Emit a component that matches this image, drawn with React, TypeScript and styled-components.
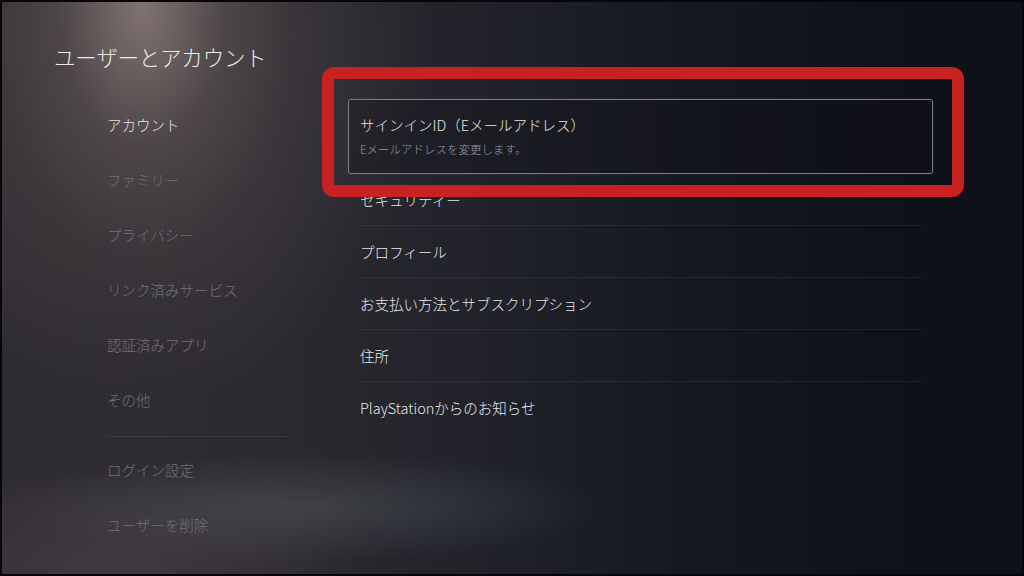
import styled, { createGlobalStyle } from 'styled-components'

const GlobalStyle = createGlobalStyle`
  html, body {
    margin: 0;
    padding: 0;
    background: #000;
  }
  * {
    box-sizing: border-box;
  }
`

const Screen = styled.div`
  position: relative;
  display: flex;
  width: 1024px;
  height: 576px;
  overflow: hidden;
  border: 2px solid #060608;
  font-family: 'Noto Sans CJK JP', 'Noto Sans', sans-serif;
  font-weight: 300;
  background:
    radial-gradient(ellipse 150px 260px at 140px 0px, rgba(165, 148, 142, 0.6), rgba(120, 105, 102, 0.2) 55%, rgba(0, 0, 0, 0) 100%),
    radial-gradient(ellipse 280px 360px at 150px 40px, rgba(105, 92, 92, 0.5), rgba(0, 0, 0, 0) 100%),
    radial-gradient(ellipse 300px 55px at 300px 505px, rgba(85, 90, 96, 0.5), rgba(0, 0, 0, 0) 100%),
    radial-gradient(ellipse 260px 90px at 120px 560px, rgba(90, 75, 82, 0.45), rgba(0, 0, 0, 0) 100%),
    linear-gradient(90deg, #302d32 0%, #2c2a30 25%, #22232b 45%, #171922 65%, #10121b 85%, #0e101a 100%);
`

const Sidebar = styled.aside`
  display: flex;
  flex-direction: column;
  width: 346px;
  flex-shrink: 0;
  padding: 40px 0 0 52px;
`

const Title = styled.h1`
  margin: 0 0 25px;
  font-size: 21.5px;
  font-weight: 300;
  line-height: 30px;
  color: #ebeaea;
  letter-spacing: -0.2px;
`

const Menu = styled.nav`
  display: flex;
  flex-direction: column;
  padding-left: 53px;
`

const MenuItem = styled.div<{ $active?: boolean }>`
  height: 55px;
  line-height: 55px;
  font-size: 14.5px;
  color: ${(p) => (p.$active ? '#e4e3e4' : '#737177')};
`

const MenuDivider = styled.hr`
  width: 180px;
  margin: 9px 0 5px;
  border: none;
  border-top: 1px solid rgba(255, 255, 255, 0.07);
`

const Content = styled.main`
  display: flex;
  flex-direction: column;
  padding-top: 97px;
`

const FocusCard = styled.div`
  display: flex;
  flex-direction: column;
  gap: 6px;
  width: 585px;
  height: 75px;
  padding: 15px 11px 0;
  border: 1.5px solid #7a7d89;
  border-radius: 3px;
  background: rgba(10, 12, 20, 0.25);
  box-shadow: 0 0 2px rgba(160, 165, 180, 0.25);
`

const CardTitle = styled.div`
  font-size: 14.5px;
  line-height: 20px;
  color: #e6e6e8;
`

const CardSub = styled.div`
  font-size: 11.5px;
  line-height: 16px;
  color: #9c9da4;
`

const Row = styled.div`
  width: 562px;
  height: 52px;
  margin-left: 12px;
  line-height: 51px;
  font-size: 14.5px;
  color: #e6e6e8;
  border-bottom: 1px solid rgba(255, 255, 255, 0.07);

  &:last-child {
    border-bottom: none;
  }
`

const Highlight = styled.div`
  position: absolute;
  left: 320px;
  top: 65px;
  width: 642px;
  height: 130px;
  border: 12px solid #c82122;
  border-radius: 12px;
  pointer-events: none;
`

const menu = ['アカウント', 'ファミリー', 'プライバシー', 'リンク済みサービス', '認証済みアプリ', 'その他']
const menuBottom = ['ログイン設定', 'ユーザーを削除']
const rows = ['セキュリティー', 'プロフィール', 'お支払い方法とサブスクリプション', '住所', 'PlayStationからのお知らせ']

export default function App() {
  return (
    <>
      <GlobalStyle />
      <Screen>
        <Sidebar>
          <Title>ユーザーとアカウント</Title>
          <Menu>
            {menu.map((label, i) => (
              <MenuItem key={label} $active={i === 0}>
                {label}
              </MenuItem>
            ))}
            <MenuDivider />
            {menuBottom.map((label) => (
              <MenuItem key={label}>{label}</MenuItem>
            ))}
          </Menu>
        </Sidebar>
        <Content>
          <FocusCard>
            <CardTitle>サインインID（Eメールアドレス）</CardTitle>
            <CardSub>Eメールアドレスを変更します。</CardSub>
          </FocusCard>
          <div>
            {rows.map((label) => (
              <Row key={label}>{label}</Row>
            ))}
          </div>
        </Content>
        <Highlight />
      </Screen>
    </>
  )
}
